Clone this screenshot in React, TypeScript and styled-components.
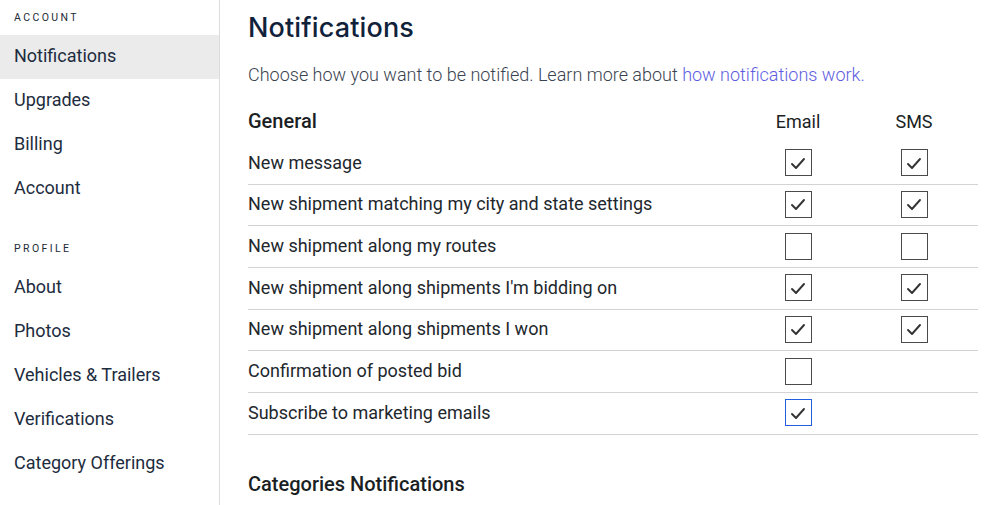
import React from "react";
import styled, { createGlobalStyle } from "styled-components";

const Global = createGlobalStyle`
  html, body { margin: 0; padding: 0; background: #fff; }
  body { font-family: Roboto, "Liberation Sans", sans-serif; color: #1e2a38; }
  * { box-sizing: border-box; }
`;

const Page = styled.div`
  display: flex;
  width: 994px;
  height: 505px;
  overflow: hidden;
`;

const Sidebar = styled.nav`
  width: 220px;
  flex: none;
  border-right: 1px solid #dcdcdc;
  display: flex;
  flex-direction: column;
  padding-top: 11px;
`;

const SectionLabel = styled.div<{ $gap?: number }>`
  font-size: 10.5px;
  letter-spacing: 2.4px;
  text-transform: uppercase;
  color: #222b36;
  padding-left: 14px;
  height: 13px;
  line-height: 13px;
  margin-top: ${(p) => p.$gap ?? 0}px;
  margin-bottom: 11px;
`;

const NavItem = styled.div<{ $active?: boolean }>`
  height: 44.15px;
  line-height: 41px;
  padding-left: 14px;
  font-size: 18px;
  color: #1d2c3e;
  background: ${(p) => (p.$active ? "#ebebeb" : "transparent")};
`;

const Main = styled.main`
  flex: 1;
  padding: 10px 16px 0 28px;
  display: flex;
  flex-direction: column;
`;

const Title = styled.h1`
  margin: 0;
  font-family: Inter, "Open Sans", sans-serif;
  font-weight: 500;
  font-size: 27px;
  letter-spacing: 0.15px;
  line-height: 36px;
  color: #10223a;
`;

const Lead = styled.p`
  margin: 17px 0 0;
  font-size: 18px;
  line-height: 24px;
  color: #3a4350;
  font-weight: 300;
`;

const Link = styled.a`
  color: #5e5de0;
  text-decoration: none;
`;

const Table = styled.div`
  margin-top: 14px;
  display: grid;
  grid-template-columns: 1fr 102px 130px;
`;

const HeaderCell = styled.div<{ $center?: boolean; $bold?: boolean }>`
  height: 42px;
  display: flex;
  align-items: center;
  justify-content: ${(p) => (p.$center ? "center" : "flex-start")};
  font-size: ${(p) => (p.$bold ? "20px" : "18px")};
  font-weight: ${(p) => (p.$bold ? 500 : 400)};
  color: #1b1f24;
  padding-bottom: 2px;
  padding-left: ${(p) => (p.$center ? "2px" : "0")};
`;

const Cell = styled.div<{ $center?: boolean }>`
  height: 41.67px;
  display: flex;
  align-items: center;
  justify-content: ${(p) => (p.$center ? "center" : "flex-start")};
  border-bottom: 1px solid #d3d3d3;
  font-size: 18px;
  color: #22272d;
  padding-bottom: ${(p) => (p.$center ? "0" : "2px")};
  padding-left: ${(p) => (p.$center ? "2px" : "0")};
`;

const Box = styled.span<{ $focus?: boolean }>`
  width: 27px;
  height: 27px;
  border: 1.5px solid ${(p) => (p.$focus ? "#1f5fe0" : "#4a4a4a")};
  display: inline-flex;
  align-items: center;
  justify-content: center;
  margin-top: -1px;
`;

const SubHeading = styled.h2`
  margin: 36px 0 0;
  font-size: 20px;
  font-weight: 500;
  color: #1b1f24;
  line-height: 26px;
`;

const Check: React.FC<{ on?: boolean; focus?: boolean }> = ({ on, focus }) => (
  <Box $focus={focus}>
    {on && (
      <svg width="20" height="20" viewBox="0 0 20 20">
        <polyline
          points="4,11 8,15 16,6"
          fill="none"
          stroke="#333"
          strokeWidth="1.9"
          strokeLinecap="round"
          strokeLinejoin="round"
        />
      </svg>
    )}
  </Box>
);

type Row = { label: string; email: boolean; sms: boolean | null; focus?: boolean };

const rows: Row[] = [
  { label: "New message", email: true, sms: true },
  { label: "New shipment matching my city and state settings", email: true, sms: true },
  { label: "New shipment along my routes", email: false, sms: false },
  { label: "New shipment along shipments I'm bidding on", email: true, sms: true },
  { label: "New shipment along shipments I won", email: true, sms: true },
  { label: "Confirmation of posted bid", email: false, sms: null },
  { label: "Subscribe to marketing emails", email: true, sms: null, focus: true },
];

export default function App() {
  return (
    <>
      <Global />
      <Page>
        <Sidebar>
          <SectionLabel>Account</SectionLabel>
          <NavItem $active>Notifications</NavItem>
          <NavItem>Upgrades</NavItem>
          <NavItem>Billing</NavItem>
          <NavItem>Account</NavItem>
          <SectionLabel $gap={30}>Profile</SectionLabel>
          <NavItem>About</NavItem>
          <NavItem>Photos</NavItem>
          <NavItem>Vehicles &amp; Trailers</NavItem>
          <NavItem>Verifications</NavItem>
          <NavItem>Category Offerings</NavItem>
        </Sidebar>
        <Main>
          <Title>Notifications</Title>
          <Lead>
            Choose how you want to be notified. Learn more about{" "}
            <Link href="#">how notifications work.</Link>
          </Lead>
          <Table>
            <HeaderCell $bold>General</HeaderCell>
            <HeaderCell $center>Email</HeaderCell>
            <HeaderCell $center>SMS</HeaderCell>
            {rows.map((r) => (
              <React.Fragment key={r.label}>
                <Cell>{r.label}</Cell>
                <Cell $center>
                  <Check on={r.email} focus={r.focus} />
                </Cell>
                <Cell $center>{r.sms !== null && <Check on={r.sms} />}</Cell>
              </React.Fragment>
            ))}
          </Table>
          <SubHeading>Categories Notifications</SubHeading>
        </Main>
      </Page>
    </>
  );
}
